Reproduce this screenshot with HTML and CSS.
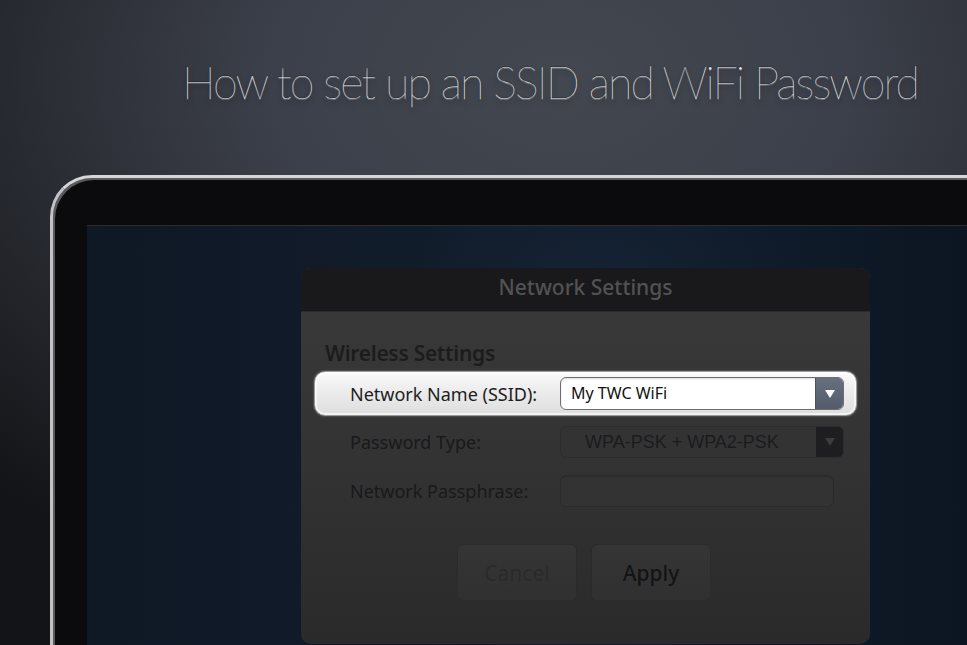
FILE: index.html
```html
<!DOCTYPE html>
<html>
<head>
<meta charset="utf-8">
<link rel="stylesheet" href="styles.css">
</head>
<body>
<header class="hero">
  <h1 class="title">How to set up an SSID and WiFi Password</h1>
</header>
<div class="laptop">
  <div class="screen">
    <div class="dialog">
      <div class="dialog-head">Network Settings</div>
      <div class="dialog-body">
        <h2 class="section">Wireless Settings</h2>
        <div class="row row-hl">
          <span class="label">Network Name (SSID):</span>
          <div class="select select-hl">
            <span class="select-text">My TWC WiFi</span>
            <span class="arrow arrow-hl"><svg width="12" height="10" viewBox="0 0 12 10"><path d="M1 1h10L6 9z" fill="#fff"/></svg></span>
          </div>
        </div>
        <div class="row">
          <span class="label label-dim">Password Type:</span>
          <div class="select select-dim">
            <span class="select-text dim-text">WPA-PSK + WPA2-PSK</span>
            <span class="arrow arrow-dim"><svg width="12" height="10" viewBox="0 0 12 10"><path d="M1 1h10L6 9z" fill="#3c3c3e"/></svg></span>
          </div>
        </div>
        <div class="row">
          <span class="label label-dim">Network Passphrase:</span>
          <div class="input-dim"></div>
        </div>
        <div class="buttons">
          <button class="btn btn-cancel">Cancel</button>
          <button class="btn btn-apply">Apply</button>
        </div>
      </div>
    </div>
  </div>
</div>
</body>
</html>
```

FILE: styles.css
```css
html, body {
  margin: 0;
  padding: 0;
}
body {
  width: 967px;
  height: 645px;
  overflow: hidden;
  background:
    radial-gradient(ellipse 820px 560px at 58% 12%, #43474f 0%, #3c404a 35%, #2b2e35 62%, #131417 100%);
  background-color: #131417;
  font-family: "Noto Sans", "Open Sans", sans-serif;
}
.hero {
  height: 175px;
  box-sizing: border-box;
  padding: 52px 0 0 182px;
}
.title {
  margin: 0;
  font-family: Lato, "Open Sans", sans-serif;
  font-weight: 100;
  font-size: 45px;
  line-height: 60px;
  letter-spacing: -2px;
  color: #eceef0;
  text-shadow: 0 1px 0 rgba(255,255,255,0.35), 0 -1px 0 rgba(0,0,0,0.3), 0 4px 5px rgba(0,0,0,0.6);
  white-space: nowrap;
}
.laptop {
  margin-left: 50px;
  height: 470px;
  box-sizing: border-box;
  border-top: 3px solid #d6d6d8;
  border-left: 3px solid #c4c4c6;
  border-top-left-radius: 42px;
  background: #0b0a0c;
  padding: 47px 0 0 34px;
  box-shadow: inset 2px 2px 0 #5a5a5e;
}
.screen {
  height: 100%;
  box-sizing: border-box;
  border-top: 1px solid #2c2c30;
  background:
    radial-gradient(ellipse 300px 420px at 58% 40%, rgba(40,60,85,0.3), transparent 70%),
    linear-gradient(90deg, #0f1825 0%, #111c2b 40%, #0f1b2a 80%, #0c1521 100%);
  padding: 42px 0 0 214px;
}
.dialog {
  width: 569px;
  height: 376px;
  border-radius: 10px;
  overflow: hidden;
  background: linear-gradient(180deg, #3a3a3a 0%, #333334 50%, #2a2a2b 100%);
  display: flex;
  flex-direction: column;
}
.dialog-head {
  height: 43px;
  flex: none;
  background: #19181a;
  color: #525254;
  font-size: 21px;
  font-weight: 500;
  line-height: 38px;
  text-align: center;
  border-bottom: 1px solid #2a2a2a;
}
.dialog-body {
  padding: 28px 13px 0 13px;
}
.section {
  margin: 0 0 0 11px;
  font-size: 21px;
  font-weight: 600;
  color: #1c1c1c;
  line-height: 26px;
  height: 31px;
  letter-spacing: -0.3px;
}
.row {
  display: flex;
  align-items: center;
  height: 45px;
  padding: 0 13px 0 36px;
  margin-bottom: 3px;
}
.row + .row {
  height: 45px;
  margin-bottom: 4px;
}
.row-hl {
  height: 45px;
  box-sizing: border-box;
  border-radius: 11px;
  border: 1px solid #9a9a9c;
  background: linear-gradient(180deg, #fafafa 0%, #ececec 45%, #dedede 100%);
  box-shadow: inset 0 0 0 2px rgba(255,255,255,0.6), 0 0 2px rgba(255,255,255,0.4);
  padding: 0 12px 0 35px;
}
.label {
  width: 210px;
  flex: none;
  font-size: 18px;
  color: #1d1d1f;
}
.label-dim {
  color: #19191a;
}
.select {
  flex: 1;
  height: 33px;
  box-sizing: border-box;
  display: flex;
  align-items: stretch;
  border-radius: 6px;
  overflow: hidden;
}
.select-hl {
  background: #fff;
  border: 1px solid #6e6e70;
  box-shadow: inset 0 1px 2px rgba(0,0,0,0.15);
}
.select-dim {
  background: #333334;
  border: 1px solid #2d2d2e;
  height: 32px;
}
.select-text {
  flex: 1;
  font-size: 16px;
  line-height: 31px;
  padding-left: 10px;
  color: #111;
}
.dim-text {
  font-family: "Liberation Sans", Arial, sans-serif;
  font-size: 18px;
  line-height: 30px;
  padding-left: 24px;
  color: #1b1b1c;
}
.arrow {
  width: 27px;
  flex: none;
  display: flex;
  align-items: center;
  justify-content: center;
}
.arrow-hl {
  background: linear-gradient(180deg, #66707f 0%, #535c6b 100%);
  border-left: 1px solid #4a5260;
}
.arrow-dim {
  background: #1e1e20;
}
.input-dim {
  width: 274px;
  height: 32px;
  box-sizing: border-box;
  border-radius: 6px;
  background: #333334;
  border: 1px solid #2b2b2c;
  box-shadow: inset 0 1px 1px rgba(0,0,0,0.15);
}
.buttons {
  display: flex;
  gap: 14px;
  padding: 27px 0 0 143px;
}
.btn {
  width: 120px;
  height: 57px;
  box-sizing: border-box;
  border-radius: 6px;
  border: 1px solid #2b2b2c;
  background: linear-gradient(180deg, #353536 0%, #303031 100%);
  font-family: "Noto Sans", "Open Sans", sans-serif;
  font-size: 21px;
  padding: 0;
}
.btn-cancel {
  color: #2a2a2b;
}
.btn-apply {
  color: #141415;
  font-weight: 500;
}
```
